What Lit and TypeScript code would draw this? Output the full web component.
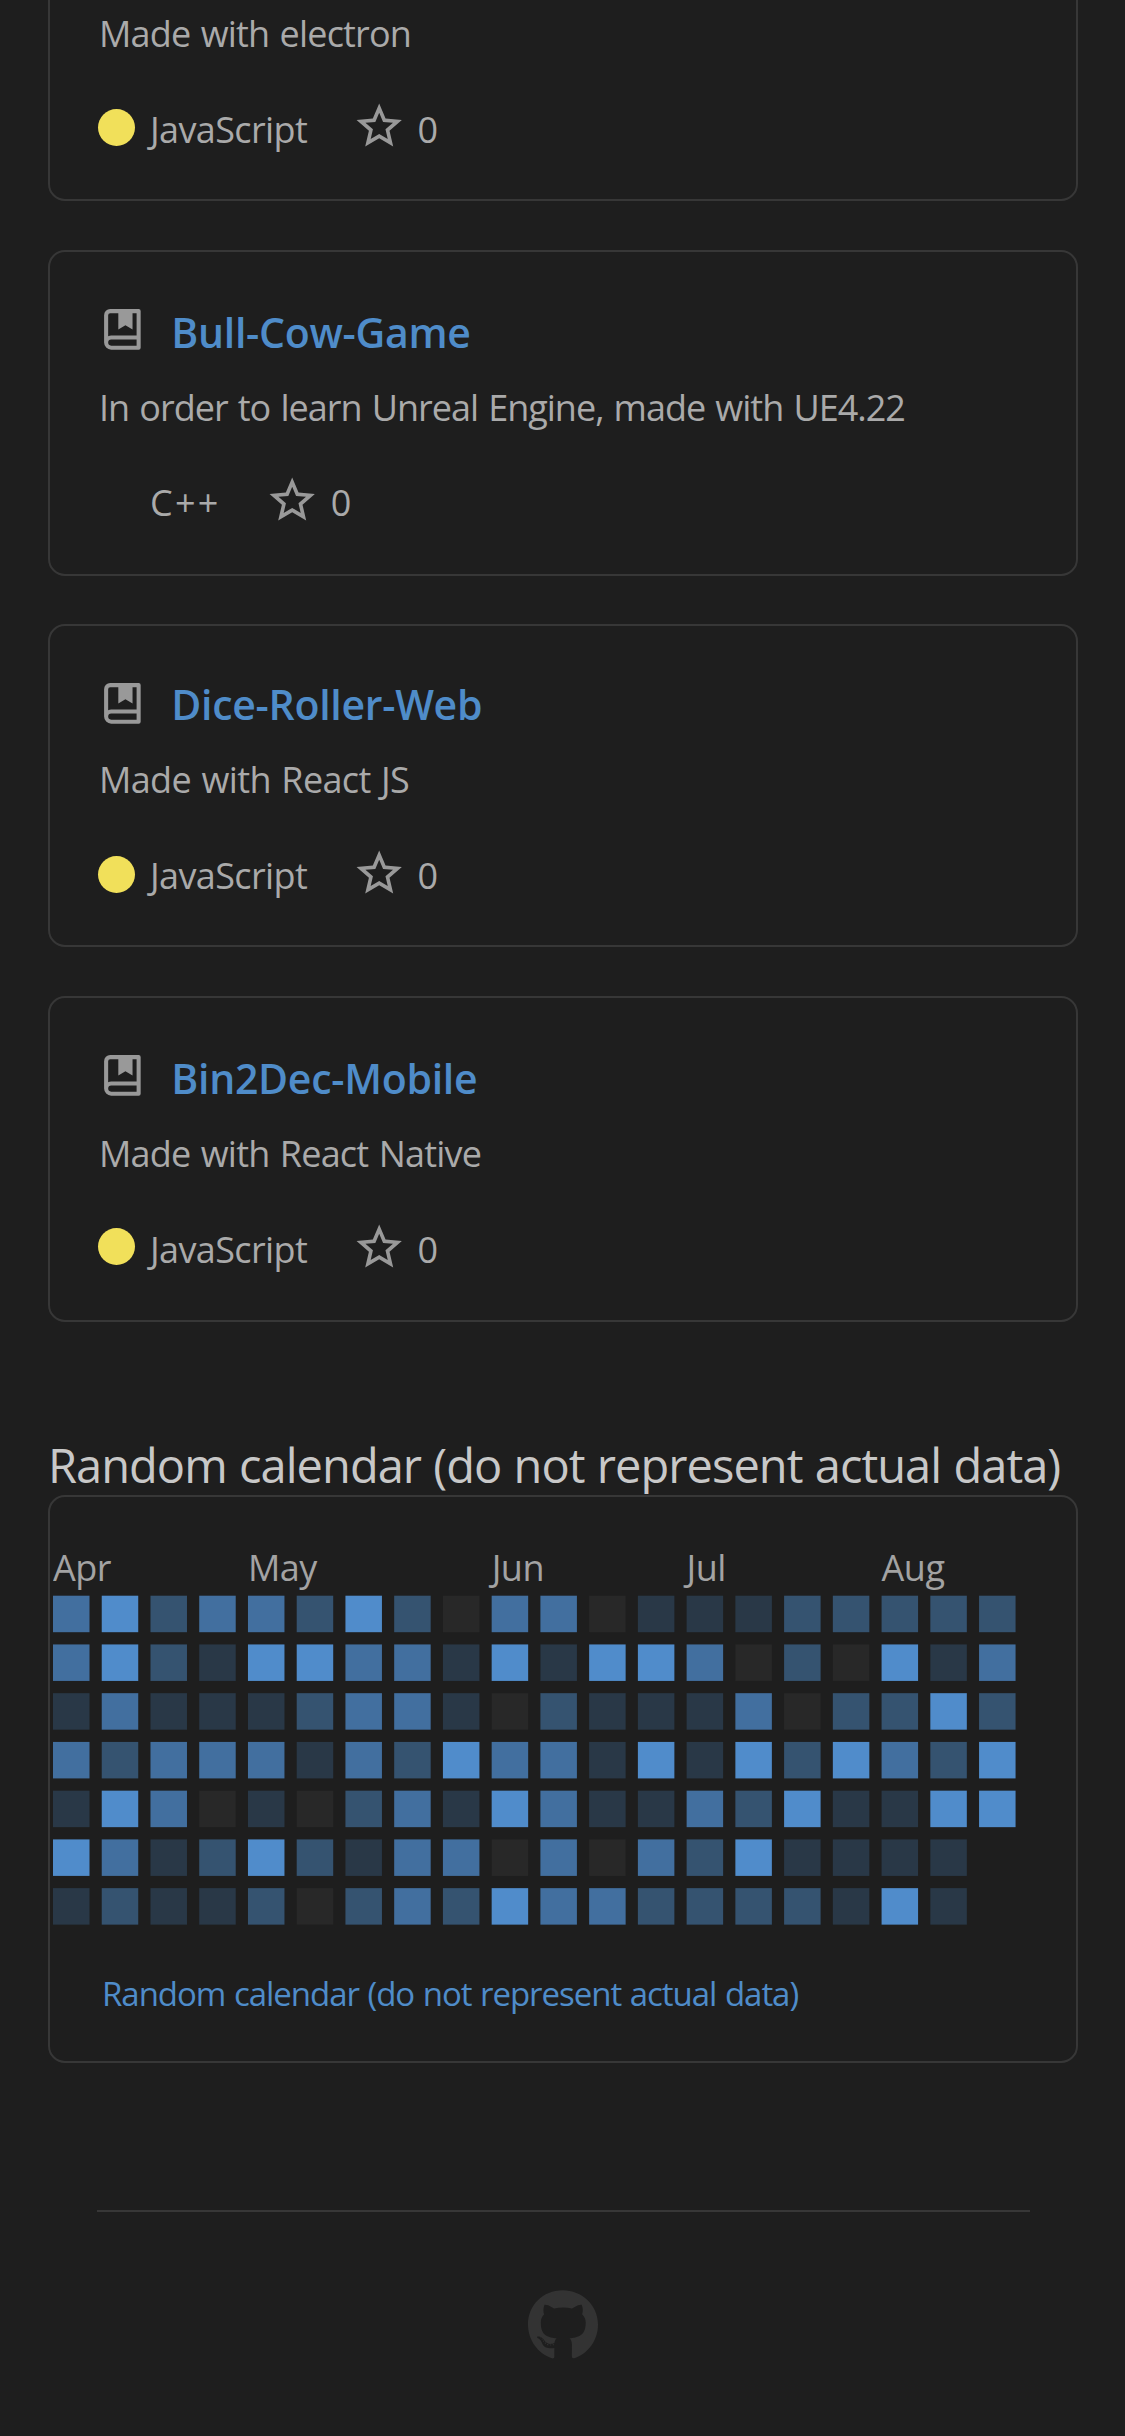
import { LitElement, html, svg, css } from "lit";
import { customElement, property } from "lit/decorators.js";
import { classMap } from "lit/directives/class-map.js";

interface Repo {
  name: string;
  description: string;
  language: string;
  color: string;
  stars: number;
  size: string;
  // Letter spacing of the description and of the language, in pixels.
  tracking: [number, number];
}

const REPOS: Repo[] = [
  { name: "", description: "Made with electron", language: "JavaScript", color: "#f1e05a", stars: 0, size: "first", tracking: [-0.82, -0.62] },
  { name: "Bull-Cow-Game", description: "In order to learn Unreal Engine, made with UE4.22", language: "C++", color: "transparent", stars: 0, size: "roomy", tracking: [-1.0, 2.2] },
  { name: "Dice-Roller-Web", description: "Made with React JS", language: "JavaScript", color: "#f1e05a", stars: 0, size: "compact", tracking: [-0.65, -0.62] },
  { name: "Bin2Dec-Mobile", description: "Made with React Native", language: "JavaScript", color: "#f1e05a", stars: 0, size: "roomy", tracking: [-0.8, -0.62] },
];

// One string per weekday, one digit (activity level 0-4) per week.
const DAYS = [
  "34233242033011122222",
  "34214433141443020413",
  "13111233102111302242",
  "32333132433141424324",
  "14301023143113241144",
  "4312421330303241111",
  "1211202324332222141",
];

const MONTHS = [
  { week: 0, label: "Apr" },
  { week: 4, label: "May" },
  { week: 9, label: "Jun" },
  { week: 13, label: "Jul" },
  { week: 17, label: "Aug" },
];

const LEVELS = ["#282828", "#293847", "#355370", "#426f9f", "#508ccb"];
const PITCH = 48.74;
const CELL = 36.5;

@customElement("repo-card")
class RepoCard extends LitElement {
  @property({ attribute: false }) repo!: Repo;

  static styles = css`
    :host { display: block; }
    .card {
      box-sizing: border-box;
      height: 326px;
      border: 2px solid #373737;
      border-radius: 17px;
      padding: 50px 47px 0 48px;
    }
    .card.first { height: 324px; }
    .card.compact { height: 323px; }
    .head { display: flex; height: 60px; }
    .book { width: 48.75px; height: 48.75px; margin-top: 3px; fill: #999; flex: none; }
    .name {
      margin-left: 24.5px;
      font-size: 41px;
      font-weight: 600;
      line-height: 60px;
      letter-spacing: -0.28px;
      color: #4f8cc9;
      white-space: nowrap;
    }
    .description { margin: 21px 0 0 1px; line-height: 49px; height: 48px; word-spacing: 1.8px; white-space: nowrap; }
    .meta { display: flex; margin-top: 46.5px; height: 48px; line-height: 51px; }
    .dot { width: 37px; height: 37px; border-radius: 50%; margin-top: 4.5px; flex: none; }
    .language { margin-left: 15px; }
    .star { width: 54.4px; height: 54.4px; margin: -4px 0 0 45px; fill: #999; flex: none; }
    .stars { margin-left: 11px; }
    .compact .name,
    .compact .description, .first .description,
    .compact .language, .first .language,
    .compact .stars, .first .stars,
    .compact .star, .first .star { transform: translateY(-2px); }
    .first .description, .first .language, .first .stars { transform: translateY(-1px); }
  `;

  render() {
    const r = this.repo;
    return html`
      <article class=${classMap({ card: true, [r.size]: true })}>
        <div class="head">
          <svg class="book" viewBox="0 0 24 24">
            <path d="M3 18.5V5a3 3 0 0 1 3-3h14a1 1 0 0 1 1 1v18a1 1 0 0 1-1 1H6.5A3.5 3.5 0 0 1 3 18.5zM19 20v-3H6.5a1.5 1.5 0 0 0 0 3H19zM10 4H6a1 1 0 0 0-1 1v10.337A3.486 3.486 0 0 1 6.5 15H19V4h-2v8l-3.5-2-3.5 2V4z" />
          </svg>
          <span class="name">${r.name}</span>
        </div>
        <div class="description" style="letter-spacing:${r.tracking[0]}px">${r.description}</div>
        <div class="meta">
          <span class="dot" style="background:${r.color}"></span>
          <span class="language" style="letter-spacing:${r.tracking[1]}px">${r.language}</span>
          <svg class="star" viewBox="0 0 24 24">
            <path d="M22 9.24l-7.19-.62L12 2 9.19 8.63 2 9.24l5.46 4.73L5.82 21 12 17.27 18.18 21l-1.63-7.03L22 9.24zM12 15.4l-3.76 2.27 1-4.28-3.32-2.88 4.38-.38L12 6.1l1.71 4.04 4.38.38-3.32 2.88 1 4.28L12 15.4z" />
          </svg>
          <span class="stars">${r.stars}</span>
        </div>
      </article>
    `;
  }
}

@customElement("activity-calendar")
class ActivityCalendar extends LitElement {
  static styles = css`
    :host { display: block; }
    .heading {
      box-sizing: border-box;
      height: 74px;
      padding-top: 14px;
      line-height: 61px;
      font-size: 47px;
      letter-spacing: -0.96px;
      word-spacing: 1px;
      color: #c8c8c8;
      white-space: nowrap;
    }
    .panel {
      box-sizing: border-box;
      height: 568px;
      border: 2px solid #373737;
      border-radius: 17px;
      padding: 43px 0 0 3px;
    }
    .grid { display: block; width: 1000px; height: 390px; }
    .month { font-size: 36px; letter-spacing: -0.5px; fill: #a3a3a3; }
    .link {
      display: block;
      margin: 40px 0 0 49px;
      font-size: 33px;
      line-height: 48px;
      letter-spacing: -1.03px;
      word-spacing: 1px;
      color: #4f8cc9;
      text-decoration: none;
      white-space: nowrap;
    }
  `;

  render() {
    const title = "Random calendar (do not represent actual data)";
    return html`
      <div class="heading">${title}</div>
      <section class="panel">
        <svg class="grid" viewBox="0 0 1000 390">
          ${MONTHS.map((m) => svg`<text class="month" x=${m.week * PITCH} y="41">${m.label}</text>`)}
          ${DAYS.map((row, y) =>
            [...row].map(
              (level, x) =>
                svg`<rect x=${x * PITCH} y=${55.7 + y * PITCH} width=${CELL} height=${CELL} fill=${LEVELS[Number(level)]} />`
            )
          )}
        </svg>
        <a class="link">${title}</a>
      </section>
    `;
  }
}

@customElement("app-root")
class AppRoot extends LitElement {
  static styles = css`
    :host {
      display: block;
      box-sizing: border-box;
      height: 2436px;
      overflow: hidden;
      background: #1e1e1e;
      color: #aaa;
      font-family: "Open Sans", "Noto Sans", sans-serif;
      font-size: 36px;
    }
    .page { display: flex; flex-direction: column; padding: 0 47.5px 0 48px; }
    .repos { display: flex; flex-direction: column; gap: 48.7px; margin-top: -123px; }
    .calendar { margin-top: 99px; }
    .footer {
      display: flex;
      justify-content: center;
      margin: 147px 47.5px 0 48.5px;
      padding-top: 77px;
      border-top: 2px solid #373737;
    }
    .logo { width: 70px; height: 72.3px; fill: #333; }
  `;

  render() {
    return html`
      <main class="page">
        <div class="repos">${REPOS.map((r) => html`<repo-card .repo=${r}></repo-card>`)}</div>
        <activity-calendar class="calendar"></activity-calendar>
        <footer class="footer">
          <svg class="logo" viewBox="0 0 496 512">
            <path d="M165.9 397.4c0 2-2.3 3.6-5.2 3.6-3.3.3-5.6-1.3-5.6-3.6 0-2 2.3-3.6 5.2-3.6 3-.3 5.6 1.3 5.6 3.6zm-31.1-4.5c-.7 2 1.3 4.3 4.3 4.9 2.6 1 5.6 0 6.2-2s-1.3-4.3-4.3-5.2c-2.6-.7-5.5.3-6.2 2.3zm44.2-1.7c-2.9.7-4.9 2.6-4.6 4.9.3 2 2.9 3.3 5.9 2.6 2.9-.7 4.9-2.6 4.6-4.6-.3-1.9-3-3.2-5.9-2.9zM244.8 8C106.1 8 0 113.3 0 252c0 110.9 69.8 205.8 169.5 239.2 12.8 2.3 17.3-5.6 17.3-12.1 0-6.2-.3-40.4-.3-61.4 0 0-70 15-84.7-29.8 0 0-11.4-29.1-27.8-36.6 0 0-22.9-15.7 1.6-15.4 0 0 24.9 2 38.6 25.8 21.9 38.6 58.6 27.5 72.9 20.9 2.3-16 8.8-27.1 16-33.7-55.9-6.2-112.3-14.3-112.3-110.5 0-27.5 7.6-41.3 23.6-58.9-2.6-6.5-11.1-33.3 2.6-67.9 20.9-6.5 69 27 69 27 20-5.6 41.5-8.5 62.8-8.5s42.8 2.9 62.8 8.5c0 0 48.1-33.6 69-27 13.7 34.7 5.2 61.4 2.6 67.9 16 17.7 25.8 31.5 25.8 58.9 0 96.5-58.9 104.2-114.8 110.5 9.2 7.9 17 22.9 17 46.4 0 33.7-.3 75.4-.3 83.6 0 6.5 4.6 14.4 17.3 12.1C428.2 457.8 496 362.9 496 252 496 113.3 383.5 8 244.8 8zM97.2 352.9c-1.3 1-1 3.3.7 5.2 1.6 1.6 3.9 2.3 5.2 1 1.3-1 1-3.3-.7-5.2-1.6-1.6-3.9-2.3-5.2-1zm-10.8-8.1c-.7 1.3.3 2.9 2.3 3.9 1.6 1 3.6.7 4.3-.7.7-1.3-.3-2.9-2.3-3.9-2-.6-3.6-.3-4.3.7zm32.4 35.6c-1.6 1.3-1 4.3 1.3 6.2 2.3 2.3 5.2 2.6 6.5 1 1.3-1.3.7-4.3-1.3-6.2-2.2-2.3-5.2-2.6-6.5-1zm-11.4-14.7c-1.6 1-1.6 3.6 0 5.9 1.6 2.3 4.3 3.3 5.6 2.3 1.6-1.3 1.6-3.9 0-6.2-1.4-2.3-4-3.3-5.6-2z" />
          </svg>
        </footer>
      </main>
    `;
  }
}
